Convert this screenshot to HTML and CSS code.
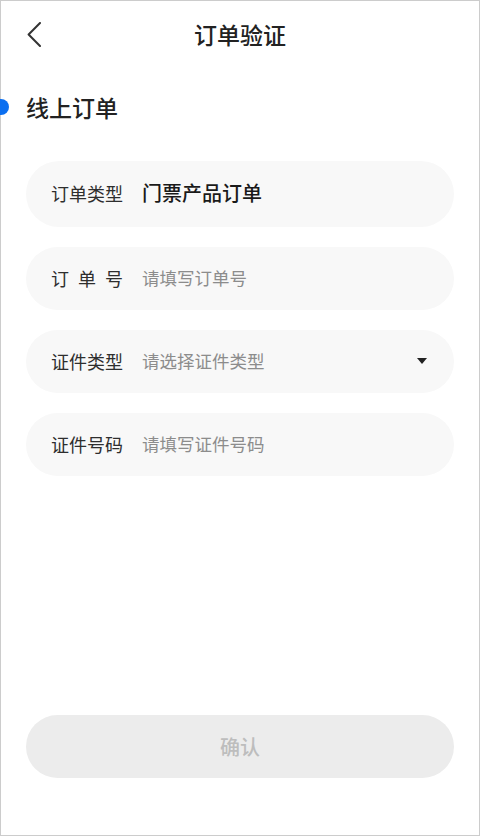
FILE: index.html
```html
<!DOCTYPE html>
<html lang="zh-CN">
<head>
<meta charset="utf-8">
<title>订单验证</title>
<link rel="stylesheet" href="styles.css">
</head>
<body>
<div class="page">
  <header class="nav">
    <div class="nav-back">
      <svg width="14" height="25" viewBox="0 0 14 25"><path d="M13 1 L1.6 12.5 L13 24" fill="none" stroke="#333" stroke-width="2" stroke-linecap="round" stroke-linejoin="round"/></svg>
    </div>
    <h1 class="nav-title">订单验证</h1>
    <div class="nav-side"></div>
  </header>

  <div class="section-title">
    <span class="section-dot"></span>
    <span class="section-text">线上订单</span>
  </div>

  <div class="form">
    <div class="field field-first">
      <span class="field-label">订单类型</span>
      <span class="field-value">门票产品订单</span>
    </div>
    <div class="field">
      <span class="field-label field-label-spread"><span>订</span><span>单</span><span>号</span></span>
      <span class="field-placeholder">请填写订单号</span>
    </div>
    <div class="field">
      <span class="field-label">证件类型</span>
      <span class="field-placeholder">请选择证件类型</span>
      <svg class="field-arrow" width="10" height="6" viewBox="0 0 10 6"><path d="M0 0 H10 L5 6 Z" fill="#222"/></svg>
    </div>
    <div class="field">
      <span class="field-label">证件号码</span>
      <span class="field-placeholder">请填写证件号码</span>
    </div>
  </div>

  <div class="footer">
    <button class="confirm">确认</button>
  </div>
</div>
</body>
</html>
```

FILE: styles.css
```css
* {
  box-sizing: border-box;
}

html, body {
  margin: 0;
  padding: 0;
  background: #fff;
}

body {
  font-family: "Noto Sans CJK SC", "Noto Sans", sans-serif;
  color: #333;
}

.page {
  position: relative;
  width: 480px;
  height: 836px;
  border: 1px solid #cccccc;
  display: flex;
  flex-direction: column;
}

.nav {
  height: 67px;
  display: grid;
  grid-template-columns: 1fr auto 1fr;
  align-items: center;
}

.nav-back {
  padding-left: 26px;
  display: flex;
  align-items: center;
}

.nav-title {
  margin: 0;
  font-size: 23px;
  font-weight: 500;
  color: #222;
  line-height: 1;
}

.section-title {
  position: relative;
  height: 78px;
  display: flex;
  align-items: center;
  padding-left: 25px;
}

.section-dot {
  position: absolute;
  left: -8px;
  top: 50%;
  width: 16px;
  height: 16px;
  margin-top: -8px;
  border-radius: 50%;
  background: #0b6ff0;
}

.section-text {
  font-size: 23px;
  font-weight: 500;
  color: #222;
  line-height: 1;
}

.form {
  margin-top: 15px;
  padding: 0 25px;
  display: flex;
  flex-direction: column;
  gap: 20px;
}

.field {
  height: 63px;
  border-radius: 32px;
  background: #f8f8f8;
  display: flex;
  align-items: center;
  padding: 0 27px 2px 25px;
}

.field-first {
  height: 66px;
  border-radius: 33px;
}

.field-label {
  width: 91px;
  flex: none;
  font-size: 18px;
  color: #2e2e2e;
  line-height: 1;
}

.field-label-spread {
  display: flex;
  justify-content: space-between;
  padding-right: 19px;
}

.field-value {
  font-size: 20px;
  font-weight: 500;
  color: #1a1a1a;
  line-height: 1;
}

.field-placeholder {
  flex: 1;
  font-size: 17.5px;
  color: #8c8c8c;
  line-height: 1;
}

.field-arrow {
  flex: none;
}

.footer {
  margin-top: auto;
  padding: 0 25px 57px;
}

.confirm {
  display: block;
  width: 100%;
  height: 63px;
  border: none;
  border-radius: 32px;
  background: #ececec;
  color: #bdbdbd;
  font-family: "Noto Sans CJK SC", "Noto Sans", sans-serif;
  font-size: 20px;
  font-weight: 500;
  padding: 0;
}
```
